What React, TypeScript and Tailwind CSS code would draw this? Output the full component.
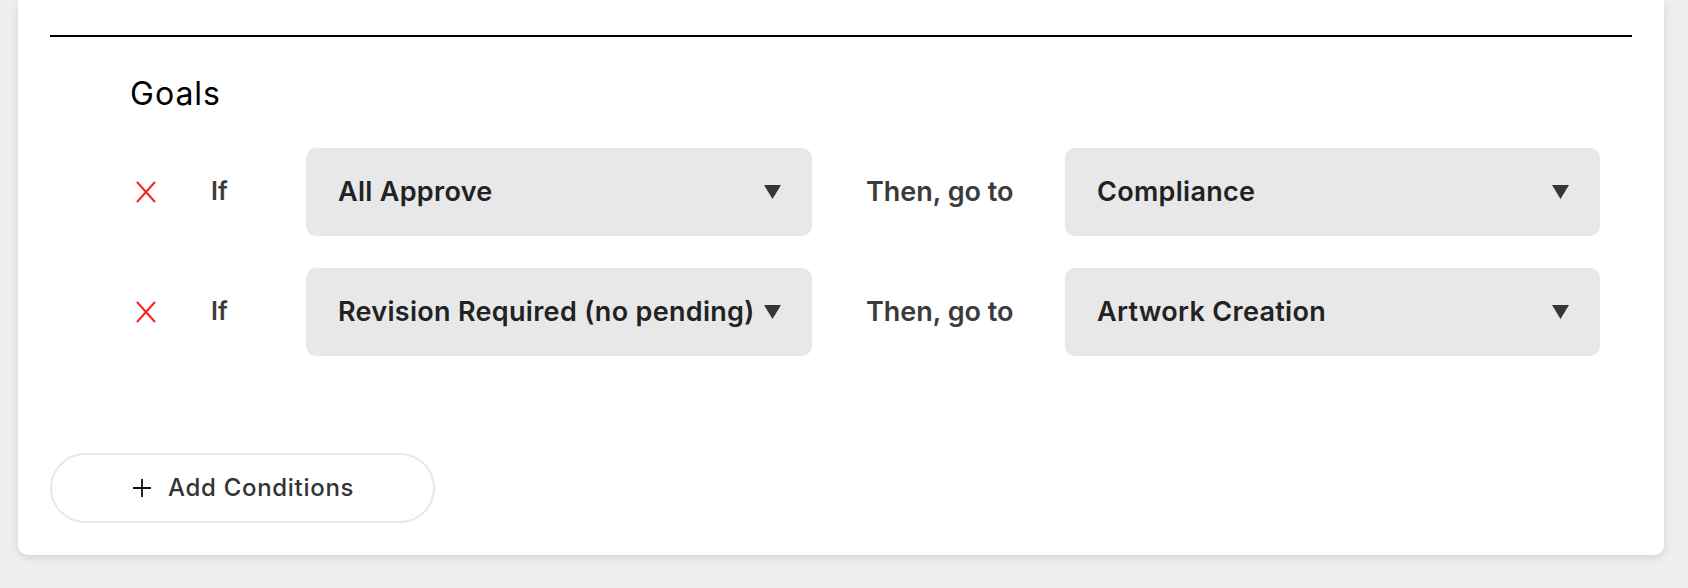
import React from "react";

const font = { fontFamily: "Inter, 'Noto Sans', sans-serif" };

const rules = [
  { when: "All Approve", then: "Compliance" },
  { when: "Revision Required (no pending)", then: "Artwork Creation" },
];

function RemoveIcon() {
  return (
    <svg width="20" height="22" viewBox="0 0 20 22" className="shrink-0">
      <path d="M1 1 L19 21 M19 1 L1 21" stroke="#ff1f1f" strokeWidth="2" fill="none" />
    </svg>
  );
}

function Caret() {
  return (
    <svg width="17" height="14" viewBox="0 0 17 14" className="shrink-0">
      <polygon points="0,0 17,0 8.5,14" fill="#363636" />
    </svg>
  );
}

function Select({ value, width }: { value: string; width: string }) {
  return (
    <div className={`${width} h-[88px] shrink-0 rounded-[10px] bg-[#e8e8e8] flex items-center justify-between pl-8 pr-[31px]`}>
      <span className="text-[27px] leading-[34px] tracking-[0.3px] font-semibold text-[#222] whitespace-nowrap">{value}</span>
      <Caret />
    </div>
  );
}

export default function App() {
  return (
    <div className="h-[588px] bg-[#efefef] overflow-hidden" style={font}>
      <div className="ml-[18px] w-[1646px] bg-white rounded-b-[10px] shadow-[0_3px_8px_rgba(0,0,0,0.12)] px-8 pt-[35px] pb-8">
        <div className="h-[2px] bg-black" />

        <h2 className="mt-[40px] pl-[80px] text-[32px] leading-[34px] tracking-[1px] font-normal text-black">Goals</h2>

        {/* Conditions */}
        <div className="mt-[37px] flex flex-col gap-8 pl-[86px]">
          {rules.map((r) => (
            <div key={r.when} className="flex items-center h-[88px]">
              <RemoveIcon />
              <span className="ml-[55px] w-[95px] text-[25px] font-semibold text-[#3b3b3b]">If</span>
              <Select value={r.when} width="w-[506px]" />
              <span className="ml-[54px] w-[199px] text-[27px] leading-[34px] font-semibold text-[#3b3b3b] whitespace-nowrap">Then, go to</span>
              <Select value={r.then} width="w-[535px]" />
            </div>
          ))}
        </div>

        <button className="mt-[97px] w-[385px] h-[70px] rounded-full border-2 border-[#e8e8e8] bg-white flex items-center pl-[81px] gap-[17px]">
          <svg width="18" height="18" viewBox="0 0 18 18">
            <path d="M9 0 V18 M0 9 H18" stroke="#111" strokeWidth="1.8" fill="none" />
          </svg>
          <span className="text-[24px] leading-[30px] tracking-[0.7px] font-medium text-[#333]">Add Conditions</span>
        </button>
      </div>
    </div>
  );
}
